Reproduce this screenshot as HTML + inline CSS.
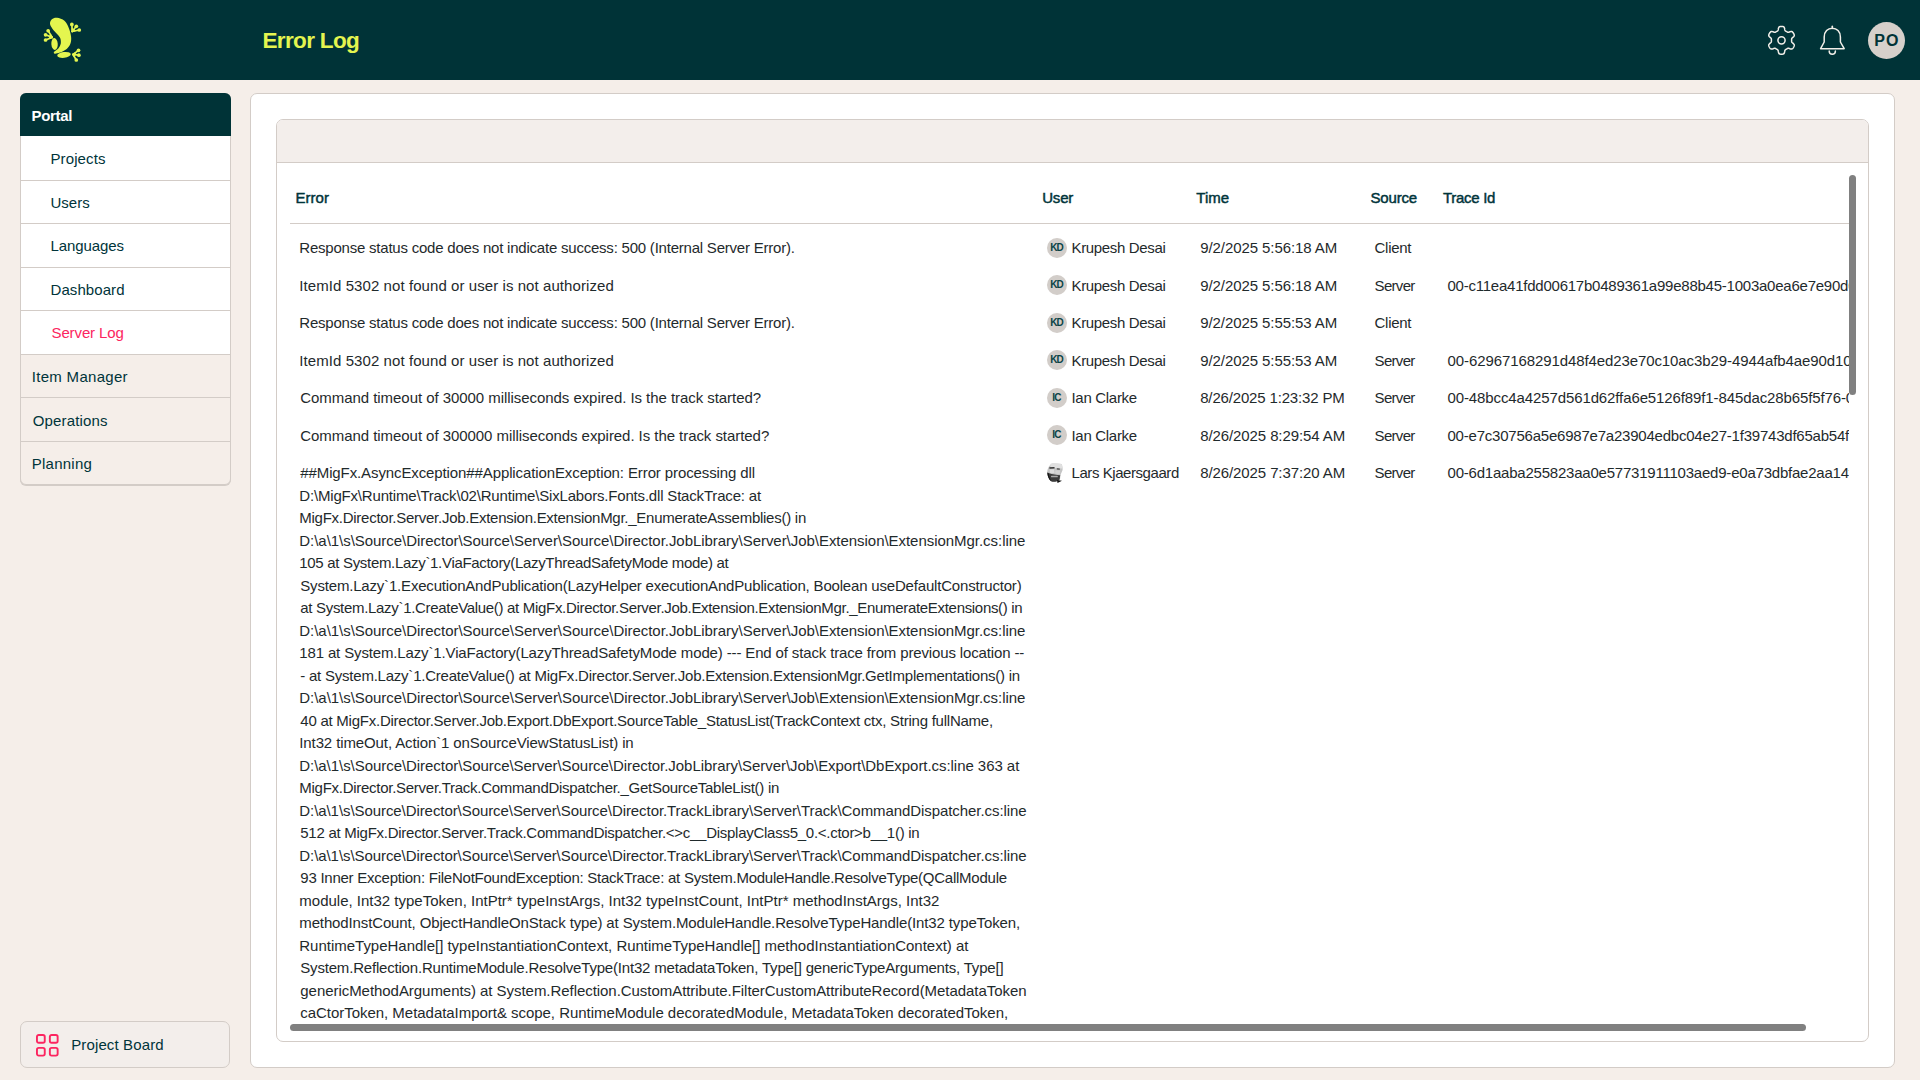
<!DOCTYPE html>
<html><head><meta charset="utf-8"><style>
*{margin:0;padding:0;box-sizing:border-box}
html,body{width:1920px;height:1080px;overflow:hidden}
body{background:#f5eee9;font-family:"Liberation Sans",sans-serif;color:#00343a;position:relative}
.t,.h,.title{position:absolute;white-space:nowrap}
.t{color:#1f2a2c}
.h{color:#00343a;-webkit-text-stroke:0.45px #00343a}
.title{color:#e4f54f}
.trace{letter-spacing:-0.12px}
.av{position:absolute;width:19.8px;height:19.8px;border-radius:50%;background:#d2cdc9;color:#0b4446;font-size:10px;font-weight:bold;text-align:center;line-height:20.4px;letter-spacing:-0.9px;text-indent:-0.9px}
#hdr{position:absolute;left:0;top:0;width:1920px;height:80px;background:#003337}
#avatar{position:absolute;left:1868px;top:21.5px;width:37px;height:37px;border-radius:50%;background:#d6d0cb;color:#003337;font-weight:bold;font-size:16px;line-height:37px;text-align:center;letter-spacing:1.2px;padding-left:1px}
#side{position:absolute;left:20px;top:93px;width:211px;height:392px;border:1px solid #d3ccc7;border-radius:6px;overflow:hidden;background:#f5eee9;box-shadow:0 1px 0 #d3ccc7}
.si{position:absolute;left:0;width:209px;border-bottom:1px solid #d3ccc7}
#panel{position:absolute;left:250px;top:93px;width:1645px;height:975px;background:#fff;border:1px solid #d3ccc7;border-radius:7px}
#card{position:absolute;left:276px;top:119px;width:1593px;height:923px;background:#fff;border:1px solid #d3ccc7;border-radius:7px;overflow:hidden}
#cardhdr{position:absolute;left:0;top:0;width:100%;height:43px;background:#f3eeeb;border-bottom:1px solid #d3ccc7}
#clip{position:absolute;left:290px;top:164px;width:1559px;height:858px;overflow:hidden}
#clip .inner{position:absolute;left:-290px;top:-164px;width:1920px;height:1080px}
#pb{position:absolute;left:20px;top:1021px;width:210px;height:47px;border:1px solid #d3ccc7;border-radius:7px;background:#f3eeeb}
</style></head><body>
<div id="hdr"></div>
<svg style="position:absolute;left:40px;top:14px" width="45" height="52" viewBox="40 14 45 52">
<g fill="#e4f54f">
<path d="M57.04 17.78 C59.14 18.02 62.47 19.01 64.44 20.74 C66.42 22.47 67.78 25.43 68.89 28.15 C70.00 30.86 70.86 34.44 71.11 37.04 C71.36 39.63 71.11 41.73 70.37 43.70 C69.63 45.68 68.40 47.41 66.67 48.89 C64.94 50.37 61.98 51.79 60.00 52.59 C58.02 53.40 55.80 53.83 54.81 53.70 C53.83 53.58 53.46 52.78 54.07 51.85 C54.69 50.93 57.41 49.51 58.52 48.15 C59.63 46.79 60.43 45.31 60.74 43.70 C61.05 42.10 60.86 40.00 60.37 38.52 C59.88 37.04 59.07 36.42 57.78 34.81 C56.48 33.21 53.89 30.74 52.59 28.89 C51.30 27.04 50.12 25.31 50.00 23.70 C49.88 22.10 50.68 20.25 51.85 19.26 C53.02 18.27 54.94 17.53 57.04 17.78 Z"/>
<ellipse cx="54.55" cy="44" rx="3.2" ry="5.95" transform="rotate(-4 54.55 44)"/>
<ellipse cx="64" cy="54.9" rx="6.8" ry="2.9" transform="rotate(-7 64 54.9)"/>
</g>
<g fill="#e4f54f" stroke="#e4f54f" stroke-width="1.7" stroke-linecap="round"><polygon points="72.22,31.48 72.08,28.81 73.77,29.51 74.90,30.92" stroke-width="1.2" stroke-linejoin="round"/><line x1="72.22" y1="31.48" x2="71.85" y2="24.44"/><circle cx="71.85" cy="24.44" r="1.85" stroke="none"/><line x1="72.22" y1="31.48" x2="76.30" y2="26.30"/><circle cx="76.30" cy="26.30" r="1.85" stroke="none"/><line x1="72.22" y1="31.48" x2="79.26" y2="30.00"/><circle cx="79.26" cy="30.00" r="1.85" stroke="none"/><polygon points="52.22,37.41 50.67,34.87 49.69,36.42 49.69,38.39" stroke-width="1.2" stroke-linejoin="round"/><line x1="52.22" y1="37.41" x2="48.15" y2="30.74"/><circle cx="48.15" cy="30.74" r="1.85" stroke="none"/><line x1="52.22" y1="37.41" x2="45.56" y2="34.81"/><circle cx="45.56" cy="34.81" r="1.85" stroke="none"/><line x1="52.22" y1="37.41" x2="45.56" y2="40.00"/><circle cx="45.56" cy="40.00" r="1.85" stroke="none"/><polygon points="72.96,54.44 75.07,52.90 75.21,54.73 74.23,56.56" stroke-width="1.2" stroke-linejoin="round"/><line x1="72.96" y1="54.44" x2="78.52" y2="50.37"/><circle cx="78.52" cy="50.37" r="1.85" stroke="none"/><line x1="72.96" y1="54.44" x2="78.89" y2="55.19"/><circle cx="78.89" cy="55.19" r="1.85" stroke="none"/><line x1="72.96" y1="54.44" x2="76.30" y2="60.00"/><circle cx="76.30" cy="60.00" r="1.85" stroke="none"/></g>
</svg>
<div class="title" style="left:262.50px;top:23.83px;font-size:22.5px;line-height:33.75px;letter-spacing:-0.657px;font-weight:bold">Error Log</div>
<svg style="position:absolute;left:1764px;top:23px" width="36" height="36" viewBox="1764 23 36 36">
<path d="M1791.60 40.30 L1791.60 40.56 L1791.60 40.83 L1791.60 41.09 L1791.60 41.36 L1791.63 41.63 L1791.70 41.92 L1791.84 42.22 L1792.11 42.56 L1792.54 42.95 L1793.09 43.41 L1793.62 43.89 L1794.01 44.36 L1794.21 44.80 L1794.27 45.20 L1794.23 45.57 L1794.14 45.93 L1794.02 46.27 L1793.88 46.61 L1793.71 46.93 L1793.54 47.25 L1793.35 47.56 L1793.15 47.86 L1792.93 48.16 L1792.70 48.43 L1792.43 48.69 L1792.13 48.91 L1791.75 49.06 L1791.27 49.10 L1790.67 49.00 L1789.99 48.79 L1789.32 48.54 L1788.76 48.36 L1788.33 48.30 L1788.00 48.32 L1787.72 48.41 L1787.47 48.52 L1787.24 48.65 L1787.01 48.78 L1786.78 48.91 L1786.55 49.05 L1786.32 49.18 L1786.09 49.31 L1785.86 49.44 L1785.63 49.58 L1785.41 49.74 L1785.20 49.94 L1785.01 50.21 L1784.85 50.62 L1784.73 51.19 L1784.61 51.89 L1784.45 52.60 L1784.23 53.16 L1783.96 53.56 L1783.64 53.81 L1783.30 53.96 L1782.95 54.06 L1782.59 54.13 L1782.23 54.17 L1781.86 54.19 L1781.50 54.20 L1781.14 54.19 L1780.77 54.17 L1780.41 54.13 L1780.05 54.06 L1779.70 53.96 L1779.36 53.81 L1779.04 53.56 L1778.77 53.16 L1778.55 52.60 L1778.39 51.89 L1778.27 51.19 L1778.15 50.62 L1777.99 50.21 L1777.80 49.94 L1777.59 49.74 L1777.37 49.58 L1777.14 49.44 L1776.91 49.31 L1776.68 49.18 L1776.45 49.05 L1776.22 48.91 L1775.99 48.78 L1775.76 48.65 L1775.53 48.52 L1775.28 48.41 L1775.00 48.32 L1774.67 48.30 L1774.24 48.36 L1773.68 48.54 L1773.01 48.79 L1772.33 49.00 L1771.73 49.10 L1771.25 49.06 L1770.87 48.91 L1770.57 48.69 L1770.30 48.43 L1770.07 48.16 L1769.85 47.86 L1769.65 47.56 L1769.46 47.25 L1769.29 46.93 L1769.12 46.61 L1768.98 46.27 L1768.86 45.93 L1768.77 45.57 L1768.73 45.20 L1768.79 44.80 L1768.99 44.36 L1769.38 43.89 L1769.91 43.41 L1770.46 42.95 L1770.89 42.56 L1771.16 42.22 L1771.30 41.92 L1771.37 41.63 L1771.40 41.36 L1771.40 41.09 L1771.40 40.83 L1771.40 40.56 L1771.40 40.30 L1771.40 40.04 L1771.40 39.77 L1771.40 39.51 L1771.40 39.24 L1771.37 38.97 L1771.30 38.68 L1771.16 38.38 L1770.89 38.04 L1770.46 37.65 L1769.91 37.19 L1769.38 36.71 L1768.99 36.24 L1768.79 35.80 L1768.73 35.40 L1768.77 35.03 L1768.86 34.67 L1768.98 34.33 L1769.12 33.99 L1769.29 33.67 L1769.46 33.35 L1769.65 33.04 L1769.85 32.74 L1770.07 32.44 L1770.30 32.17 L1770.57 31.91 L1770.87 31.69 L1771.25 31.54 L1771.73 31.50 L1772.33 31.60 L1773.01 31.81 L1773.68 32.06 L1774.24 32.24 L1774.67 32.30 L1775.00 32.28 L1775.28 32.19 L1775.53 32.08 L1775.76 31.95 L1775.99 31.82 L1776.22 31.69 L1776.45 31.55 L1776.68 31.42 L1776.91 31.29 L1777.14 31.16 L1777.37 31.02 L1777.59 30.86 L1777.80 30.66 L1777.99 30.39 L1778.15 29.98 L1778.27 29.41 L1778.39 28.71 L1778.55 28.00 L1778.77 27.44 L1779.04 27.04 L1779.36 26.79 L1779.70 26.64 L1780.05 26.54 L1780.41 26.47 L1780.77 26.43 L1781.14 26.41 L1781.50 26.40 L1781.86 26.41 L1782.23 26.43 L1782.59 26.47 L1782.95 26.54 L1783.30 26.64 L1783.64 26.79 L1783.96 27.04 L1784.23 27.44 L1784.45 28.00 L1784.61 28.71 L1784.73 29.41 L1784.85 29.98 L1785.01 30.39 L1785.20 30.66 L1785.41 30.86 L1785.63 31.02 L1785.86 31.16 L1786.09 31.29 L1786.32 31.42 L1786.55 31.55 L1786.78 31.69 L1787.01 31.82 L1787.24 31.95 L1787.47 32.08 L1787.72 32.19 L1788.00 32.28 L1788.33 32.30 L1788.76 32.24 L1789.32 32.06 L1789.99 31.81 L1790.67 31.60 L1791.27 31.50 L1791.75 31.54 L1792.13 31.69 L1792.43 31.91 L1792.70 32.17 L1792.93 32.44 L1793.15 32.74 L1793.35 33.04 L1793.54 33.35 L1793.71 33.67 L1793.88 33.99 L1794.02 34.33 L1794.14 34.67 L1794.23 35.03 L1794.27 35.40 L1794.21 35.80 L1794.01 36.24 L1793.62 36.71 L1793.09 37.19 L1792.54 37.65 L1792.11 38.04 L1791.84 38.38 L1791.70 38.68 L1791.63 38.97 L1791.60 39.24 L1791.60 39.51 L1791.60 39.77 L1791.60 40.04 Z" fill="none" stroke="#f2efe9" stroke-width="1.5" stroke-linejoin="round"/>
<circle cx="1781.5" cy="40.3" r="3.6" fill="none" stroke="#f2efe9" stroke-width="1.5"/>
</svg>
<svg style="position:absolute;left:1816px;top:22px" width="34" height="36" viewBox="1816 22 34 36">
<g fill="none" stroke="#f2efe9" stroke-width="1.5" stroke-linejoin="round" stroke-linecap="round">
<line x1="1832.3" y1="26.3" x2="1832.3" y2="28.5"/>
<path d="M1820.6 48.7 L1824.2 42 L1824.2 37 C1824.2 31.5 1827.8 28.2 1832.3 28.2 C1836.8 28.2 1840.4 31.5 1840.4 37 L1840.4 42 L1844.2 48.7 Z"/>
<path d="M1829.2 51 C1829.2 53 1830.6 54.3 1832.3 54.3 C1834 54.3 1835.4 53 1835.4 51"/>
</g></svg>
<div id="avatar">PO</div>

<div id="side">
  <div class="si" style="top:42px;height:45px;background:#fff"></div>
  <div class="si" style="top:87px;height:43px;background:#fff"></div>
  <div class="si" style="top:130px;height:44px;background:#fff"></div>
  <div class="si" style="top:174px;height:43px;background:#fff"></div>
  <div class="si" style="top:217px;height:44px;background:#fff"></div>
  <div class="si" style="top:261px;height:43px"></div>
  <div class="si" style="top:304px;height:44px"></div>
</div>
<div style="position:absolute;left:20px;top:93px;width:211px;height:43px;background:#003337;border-radius:6px 6px 0 0"></div>
<div class="t" style="left:31.60px;top:105.05px;font-size:15px;line-height:22.5px;letter-spacing:-0.328px;font-weight:bold;color:#fff">Portal</div>
<div class="t" style="left:50.50px;top:148.05px;font-size:15px;line-height:22.5px;letter-spacing:0.102px;color:#00343a">Projects</div>
<div class="t" style="left:50.50px;top:191.65px;font-size:15px;line-height:22.5px;letter-spacing:0.000px;color:#00343a">Users</div>
<div class="t" style="left:50.50px;top:235.25px;font-size:15px;line-height:22.5px;letter-spacing:-0.092px;color:#00343a">Languages</div>
<div class="t" style="left:50.50px;top:278.85px;font-size:15px;line-height:22.5px;letter-spacing:0.083px;color:#00343a">Dashboard</div>
<div class="t" style="left:51.50px;top:322.45px;font-size:15px;line-height:22.5px;letter-spacing:-0.115px;color:#fc2560">Server Log</div>
<div class="t" style="left:31.80px;top:366.05px;font-size:15px;line-height:22.5px;letter-spacing:0.296px;color:#00343a">Item Manager</div>
<div class="t" style="left:32.80px;top:409.65px;font-size:15px;line-height:22.5px;letter-spacing:0.158px;color:#00343a">Operations</div>
<div class="t" style="left:31.80px;top:453.25px;font-size:15px;line-height:22.5px;letter-spacing:0.237px;color:#00343a">Planning</div>


<div id="pb">
<svg style="position:absolute;left:15px;top:12px" width="24" height="24" viewBox="0 0 24 24"><g fill="none" stroke="#fc2560" stroke-width="1.9"><rect x="0.95" y="0.95" width="7.8" height="7.8" rx="1.8"/><rect x="13.85" y="0.95" width="7.8" height="7.8" rx="1.8"/><rect x="0.95" y="13.85" width="7.8" height="7.8" rx="1.8"/><rect x="13.85" y="13.85" width="7.8" height="7.8" rx="1.8"/></g></svg>
</div>
<div class="t" style="left:71.20px;top:1034.15px;font-size:15px;line-height:22.5px;letter-spacing:0.130px;color:#00343a">Project Board</div>

<div id="panel"></div>
<div id="card"><div id="cardhdr"></div></div>

<div class="h" style="left:295.40px;top:186.65px;font-size:15px;line-height:22.5px;letter-spacing:0.041px">Error</div>
<div class="h" style="left:1042.25px;top:186.65px;font-size:15px;line-height:22.5px;letter-spacing:-0.225px">User</div>
<div class="h" style="left:1196.25px;top:186.65px;font-size:15px;line-height:22.5px;letter-spacing:0.022px">Time</div>
<div class="h" style="left:1370.50px;top:186.65px;font-size:15px;line-height:22.5px;letter-spacing:-0.187px">Source</div>
<div class="h" style="left:1443.00px;top:186.65px;font-size:15px;line-height:22.5px;letter-spacing:-0.303px">Trace Id</div>
<div style="position:absolute;left:290px;top:223px;width:1559px;height:1px;background:#d3ccc7"></div>

<div id="clip"><div class="inner">
<div class="t" style="left:299.30px;top:237.35px;font-size:15px;line-height:22.5px;letter-spacing:-0.218px">Response status code does not indicate success: 500 (Internal Server Error).</div>
<div class="av" style="left:1047px;top:237.90px">KD</div>
<div class="t" style="left:1071.50px;top:237.35px;font-size:15px;line-height:22.5px;letter-spacing:-0.346px">Krupesh Desai</div>
<div class="t" style="left:1200.20px;top:237.35px;font-size:15px;line-height:22.5px;letter-spacing:-0.076px">9/2/2025 5:56:18 AM</div>
<div class="t" style="left:1374.60px;top:237.35px;font-size:15px;line-height:22.5px;letter-spacing:-0.316px">Client</div>
<div class="t" style="left:299.30px;top:274.85px;font-size:15px;line-height:22.5px;letter-spacing:0.074px">ItemId 5302 not found or user is not authorized</div>
<div class="av" style="left:1047px;top:275.40px">KD</div>
<div class="t" style="left:1071.50px;top:274.85px;font-size:15px;line-height:22.5px;letter-spacing:-0.346px">Krupesh Desai</div>
<div class="t" style="left:1200.20px;top:274.85px;font-size:15px;line-height:22.5px;letter-spacing:-0.076px">9/2/2025 5:56:18 AM</div>
<div class="t" style="left:1374.60px;top:274.85px;font-size:15px;line-height:22.5px;letter-spacing:-0.697px">Server</div>
<div class="t" style="left:1447.50px;top:274.85px;font-size:15px;line-height:22.5px;letter-spacing:-0.234px">00-c11ea41fdd00617b0489361a99e88b45-1003a0ea6e7e90d08-01</div>
<div class="t" style="left:299.30px;top:312.35px;font-size:15px;line-height:22.5px;letter-spacing:-0.218px">Response status code does not indicate success: 500 (Internal Server Error).</div>
<div class="av" style="left:1047px;top:312.90px">KD</div>
<div class="t" style="left:1071.50px;top:312.35px;font-size:15px;line-height:22.5px;letter-spacing:-0.346px">Krupesh Desai</div>
<div class="t" style="left:1200.20px;top:312.35px;font-size:15px;line-height:22.5px;letter-spacing:-0.076px">9/2/2025 5:55:53 AM</div>
<div class="t" style="left:1374.60px;top:312.35px;font-size:15px;line-height:22.5px;letter-spacing:-0.316px">Client</div>
<div class="t" style="left:299.30px;top:349.85px;font-size:15px;line-height:22.5px;letter-spacing:0.074px">ItemId 5302 not found or user is not authorized</div>
<div class="av" style="left:1047px;top:350.40px">KD</div>
<div class="t" style="left:1071.50px;top:349.85px;font-size:15px;line-height:22.5px;letter-spacing:-0.346px">Krupesh Desai</div>
<div class="t" style="left:1200.20px;top:349.85px;font-size:15px;line-height:22.5px;letter-spacing:-0.076px">9/2/2025 5:55:53 AM</div>
<div class="t" style="left:1374.60px;top:349.85px;font-size:15px;line-height:22.5px;letter-spacing:-0.697px">Server</div>
<div class="t" style="left:1447.50px;top:349.85px;font-size:15px;line-height:22.5px;letter-spacing:-0.093px">00-62967168291d48f4ed23e70c10ac3b29-4944afb4ae90d10e-01</div>
<div class="t" style="left:300.30px;top:387.35px;font-size:15px;line-height:22.5px;letter-spacing:-0.054px">Command timeout of 30000 milliseconds expired. Is the track started?</div>
<div class="av" style="left:1047px;top:387.90px">IC</div>
<div class="t" style="left:1071.50px;top:387.35px;font-size:15px;line-height:22.5px;letter-spacing:-0.302px">Ian Clarke</div>
<div class="t" style="left:1200.20px;top:387.35px;font-size:15px;line-height:22.5px;letter-spacing:-0.159px">8/26/2025 1:23:32 PM</div>
<div class="t" style="left:1374.60px;top:387.35px;font-size:15px;line-height:22.5px;letter-spacing:-0.697px">Server</div>
<div class="t" style="left:1447.50px;top:387.35px;font-size:15px;line-height:22.5px;letter-spacing:-0.111px">00-48bcc4a4257d561d62ffa6e5126f89f1-845dac28b65f5f76-01</div>
<div class="t" style="left:300.30px;top:424.85px;font-size:15px;line-height:22.5px;letter-spacing:-0.056px">Command timeout of 300000 milliseconds expired. Is the track started?</div>
<div class="av" style="left:1047px;top:425.40px">IC</div>
<div class="t" style="left:1071.50px;top:424.85px;font-size:15px;line-height:22.5px;letter-spacing:-0.302px">Ian Clarke</div>
<div class="t" style="left:1200.20px;top:424.85px;font-size:15px;line-height:22.5px;letter-spacing:-0.096px">8/26/2025 8:29:54 AM</div>
<div class="t" style="left:1374.60px;top:424.85px;font-size:15px;line-height:22.5px;letter-spacing:-0.697px">Server</div>
<div class="t" style="left:1447.50px;top:424.85px;font-size:15px;line-height:22.5px;letter-spacing:-0.218px">00-e7c30756a5e6987e7a23904edbc04e27-1f39743df65ab54f-01</div>
<div class="t" style="left:300.30px;top:462.45px;font-size:15px;line-height:22.5px;letter-spacing:-0.109px">##MigFx.AsyncException##ApplicationException: Error processing dll</div>
<div class="t" style="left:299.30px;top:484.95px;font-size:15px;line-height:22.5px;letter-spacing:-0.183px">D:\MigFx\Runtime\Track\02\Runtime\SixLabors.Fonts.dll StackTrace: at</div>
<div class="t" style="left:299.30px;top:507.45px;font-size:15px;line-height:22.5px;letter-spacing:-0.262px">MigFx.Director.Server.Job.Extension.ExtensionMgr._EnumerateAssemblies() in</div>
<div class="t" style="left:299.30px;top:529.95px;font-size:15px;line-height:22.5px;letter-spacing:-0.040px">D:\a\1\s\Source\Director\Source\Server\Source\Director.JobLibrary\Server\Job\Extension\ExtensionMgr.cs:line</div>
<div class="t" style="left:299.30px;top:552.45px;font-size:15px;line-height:22.5px;letter-spacing:-0.313px">105 at System.Lazy`1.ViaFactory(LazyThreadSafetyMode mode) at</div>
<div class="t" style="left:300.30px;top:574.95px;font-size:15px;line-height:22.5px;letter-spacing:-0.185px">System.Lazy`1.ExecutionAndPublication(LazyHelper executionAndPublication, Boolean useDefaultConstructor)</div>
<div class="t" style="left:300.30px;top:597.45px;font-size:15px;line-height:22.5px;letter-spacing:-0.313px">at System.Lazy`1.CreateValue() at MigFx.Director.Server.Job.Extension.ExtensionMgr._EnumerateExtensions() in</div>
<div class="t" style="left:299.30px;top:619.95px;font-size:15px;line-height:22.5px;letter-spacing:-0.040px">D:\a\1\s\Source\Director\Source\Server\Source\Director.JobLibrary\Server\Job\Extension\ExtensionMgr.cs:line</div>
<div class="t" style="left:299.30px;top:642.45px;font-size:15px;line-height:22.5px;letter-spacing:-0.142px">181 at System.Lazy`1.ViaFactory(LazyThreadSafetyMode mode) --- End of stack trace from previous location --</div>
<div class="t" style="left:300.30px;top:664.95px;font-size:15px;line-height:22.5px;letter-spacing:-0.227px">- at System.Lazy`1.CreateValue() at MigFx.Director.Server.Job.Extension.ExtensionMgr.GetImplementations() in</div>
<div class="t" style="left:299.30px;top:687.45px;font-size:15px;line-height:22.5px;letter-spacing:-0.040px">D:\a\1\s\Source\Director\Source\Server\Source\Director.JobLibrary\Server\Job\Extension\ExtensionMgr.cs:line</div>
<div class="t" style="left:300.30px;top:709.95px;font-size:15px;line-height:22.5px;letter-spacing:-0.243px">40 at MigFx.Director.Server.Job.Export.DbExport.SourceTable_StatusList(TrackContext ctx, String fullName,</div>
<div class="t" style="left:299.30px;top:732.45px;font-size:15px;line-height:22.5px;letter-spacing:-0.112px">Int32 timeOut, Action`1 onSourceViewStatusList) in</div>
<div class="t" style="left:299.30px;top:754.95px;font-size:15px;line-height:22.5px;letter-spacing:-0.050px">D:\a\1\s\Source\Director\Source\Server\Source\Director.JobLibrary\Server\Job\Export\DbExport.cs:line 363 at</div>
<div class="t" style="left:299.30px;top:777.45px;font-size:15px;line-height:22.5px;letter-spacing:-0.272px">MigFx.Director.Server.Track.CommandDispatcher._GetSourceTableList() in</div>
<div class="t" style="left:299.30px;top:799.95px;font-size:15px;line-height:22.5px;letter-spacing:-0.073px">D:\a\1\s\Source\Director\Source\Server\Source\Director.TrackLibrary\Server\Track\CommandDispatcher.cs:line</div>
<div class="t" style="left:300.30px;top:822.45px;font-size:15px;line-height:22.5px;letter-spacing:-0.266px">512 at MigFx.Director.Server.Track.CommandDispatcher.&lt;&gt;c__DisplayClass5_0.&lt;.ctor&gt;b__1() in</div>
<div class="t" style="left:299.30px;top:844.95px;font-size:15px;line-height:22.5px;letter-spacing:-0.073px">D:\a\1\s\Source\Director\Source\Server\Source\Director.TrackLibrary\Server\Track\CommandDispatcher.cs:line</div>
<div class="t" style="left:300.30px;top:867.45px;font-size:15px;line-height:22.5px;letter-spacing:-0.247px">93 Inner Exception: FileNotFoundException: StackTrace: at System.ModuleHandle.ResolveType(QCallModule</div>
<div class="t" style="left:299.30px;top:889.95px;font-size:15px;line-height:22.5px;letter-spacing:-0.003px">module, Int32 typeToken, IntPtr* typeInstArgs, Int32 typeInstCount, IntPtr* methodInstArgs, Int32</div>
<div class="t" style="left:299.30px;top:912.45px;font-size:15px;line-height:22.5px;letter-spacing:-0.130px">methodInstCount, ObjectHandleOnStack type) at System.ModuleHandle.ResolveTypeHandle(Int32 typeToken,</div>
<div class="t" style="left:299.30px;top:934.95px;font-size:15px;line-height:22.5px;letter-spacing:-0.013px">RuntimeTypeHandle[] typeInstantiationContext, RuntimeTypeHandle[] methodInstantiationContext) at</div>
<div class="t" style="left:300.30px;top:957.45px;font-size:15px;line-height:22.5px;letter-spacing:-0.192px">System.Reflection.RuntimeModule.ResolveType(Int32 metadataToken, Type[] genericTypeArguments, Type[]</div>
<div class="t" style="left:300.30px;top:979.95px;font-size:15px;line-height:22.5px;letter-spacing:-0.048px">genericMethodArguments) at System.Reflection.CustomAttribute.FilterCustomAttributeRecord(MetadataToken</div>
<div class="t" style="left:300.30px;top:1002.45px;font-size:15px;line-height:22.5px;letter-spacing:-0.036px">caCtorToken, MetadataImport&amp; scope, RuntimeModule decoratedModule, MetadataToken decoratedToken,</div>
<svg style="position:absolute;left:1040px;top:460.00px;filter:blur(0.35px)" width="30" height="26" viewBox="0 0 30 26">
<g>
<path d="M7.2 12 C7.5 8 9.5 4.5 12.5 3.4 L21.7 3.9 C22.3 5.5 22.7 8 22.6 10 L20.7 14.5 L20 19.3 C18.5 21.5 16 22 13 21.8 C10 21 8 18 7.3 15 Z" fill="#c4c4c4"/>
<path d="M11 3.6 C14 3 19 3 21.7 3.9 C22.2 5.5 22.5 7 22.5 8.5 L11 8 C10 6 10 4.5 11 3.6Z" fill="#e0e0e0"/>
<path d="M9.3 7.2 L14.5 7 L14.6 8.6 L9.5 8.8Z" fill="#333"/>
<path d="M16.8 8.3 L19.8 8.4 L19.8 9.7 L16.8 9.6Z" fill="#444"/>
<path d="M9.8 9.5 L14 9.3 L14.5 13 L10 13.2Z" fill="#dedede"/>
<path d="M15.3 10.2 L20 10.5 L19.8 14 L15.2 13.8Z" fill="#d4d4d4"/>
<path d="M7.3 12.2 C7.6 16 8.5 19 11 21.2 C13.5 22.5 17 21.8 19.6 19.5 L20.2 15.2 C17 14.8 12 14.3 9.2 13.2 Z" fill="#3c3c3c"/>
<path d="M7.4 13 C7.8 17 9 19.8 11.5 21.3 C10 19 9 16 8.8 13.5Z" fill="#151515"/>
<rect x="11" y="15.7" width="6.8" height="1.6" rx="0.5" fill="#a8a8a8"/>
<path d="M17 20 L22 20.8 L17.5 23 Z" fill="#111"/>
</g></svg>
<div class="t" style="left:1071.50px;top:462.45px;font-size:15px;line-height:22.5px;letter-spacing:-0.432px">Lars Kjaersgaard</div>
<div class="t" style="left:1200.20px;top:462.45px;font-size:15px;line-height:22.5px;letter-spacing:-0.096px">8/26/2025 7:37:20 AM</div>
<div class="t" style="left:1374.60px;top:462.45px;font-size:15px;line-height:22.5px;letter-spacing:-0.697px">Server</div>
<div class="t" style="left:1447.50px;top:462.45px;font-size:15px;line-height:22.5px;letter-spacing:-0.216px">00-6d1aaba255823aa0e57731911103aed9-e0a73dbfae2aa14f-01</div>
</div></div>

<div style="position:absolute;left:1849px;top:175px;width:7px;height:220px;border-radius:4px;background:#808080"></div>
<div style="position:absolute;left:290px;top:1024px;width:1516px;height:7px;border-radius:4px;background:#808080"></div>
</body></html>
